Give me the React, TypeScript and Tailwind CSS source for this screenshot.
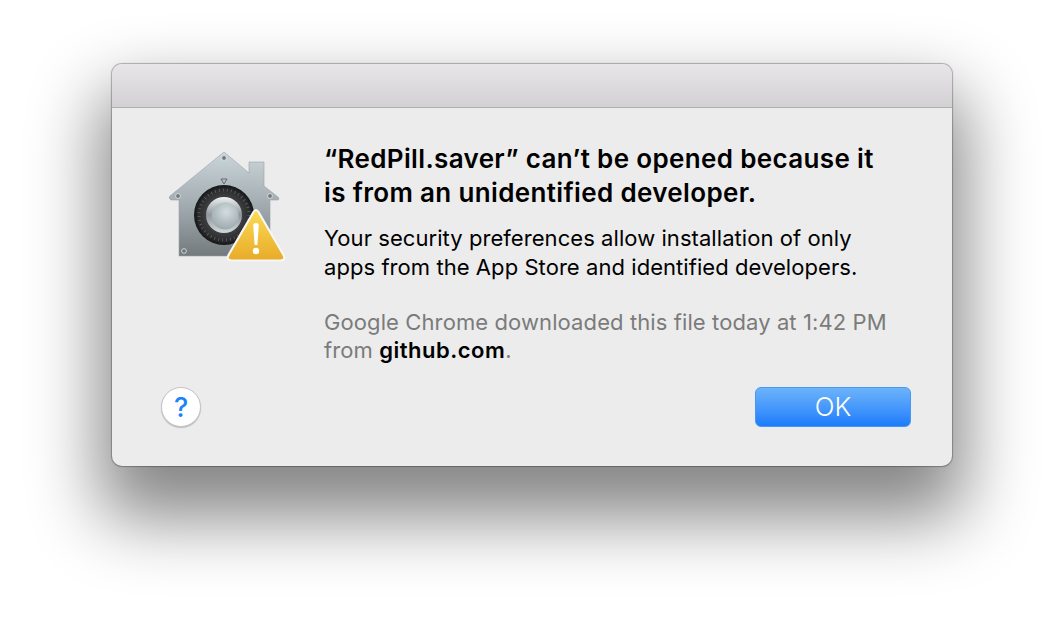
import React from 'react';

const GatekeeperIcon: React.FC = () => (
  <svg width="130" height="120" viewBox="160 145 130 120" className="shrink-0">
    <defs>
      <linearGradient id="house" x1="0" y1="0" x2="0" y2="1">
        <stop offset="0" stopColor="#cbd6da" />
        <stop offset="0.5" stopColor="#a3adb1" />
        <stop offset="1" stopColor="#737a7e" />
      </linearGradient>
      <radialGradient id="dial" cx="0.5" cy="0.5" r="0.5">
        <stop offset="0.6" stopColor="#3d3f41" />
        <stop offset="0.85" stopColor="#2b2c2e" />
        <stop offset="1" stopColor="#141515" />
      </radialGradient>
      <linearGradient id="knob" x1="0" y1="0" x2="0" y2="1">
        <stop offset="0" stopColor="#eef1f2" />
        <stop offset="0.5" stopColor="#8f979b" />
        <stop offset="1" stopColor="#d5dadc" />
      </linearGradient>
      <radialGradient id="knobTop" cx="0.55" cy="0.35" r="0.7">
        <stop offset="0" stopColor="#d3dde1" />
        <stop offset="1" stopColor="#9aa6ab" />
      </radialGradient>
      <linearGradient id="warn" x1="0" y1="0" x2="0" y2="1">
        <stop offset="0" stopColor="#fbdb55" />
        <stop offset="1" stopColor="#e8ab28" />
      </linearGradient>
    </defs>
    <path
      d="M224 152 L249 173 L249 162 L264 162 L264 186 L278 197 Q280 199 278 200 L270 200 L270 256 L179 256 L179 200 L171 200 Q168 198 170 196 Z"
      fill="url(#house)"
      stroke="#9aa3a7"
      strokeWidth="0.6"
    />
    <circle cx="224" cy="158" r="2.4" fill="#6f787c" stroke="#e3e7e9" strokeWidth="0.8" />
    <circle cx="178" cy="196" r="2.4" fill="#6f787c" stroke="#e3e7e9" strokeWidth="0.8" />
    <circle cx="270" cy="196" r="2.4" fill="#6f787c" stroke="#e3e7e9" strokeWidth="0.8" />
    <circle cx="184" cy="251" r="2.4" fill="#6f787c" stroke="#e3e7e9" strokeWidth="0.8" />
    <path d="M221 179 H227 L224 184 Z" fill="none" stroke="#5a6165" strokeWidth="0.9" />
    <circle cx="224" cy="215" r="30" fill="url(#dial)" />
    <circle cx="224" cy="215" r="25" fill="none" stroke="#5e6062" strokeWidth="3" strokeDasharray="0.8 3.2" />
    <circle cx="224" cy="215" r="18" fill="url(#knob)" />
    <circle cx="225" cy="216" r="13.5" fill="url(#knobTop)" />
    <path
      d="M253.5 212 Q256 208 258.5 212 L283.5 255 Q286 260.5 280.5 260.5 L231.5 260.5 Q226 260.5 228.5 255 Z"
      fill="url(#warn)"
      stroke="#f6f6f6"
      strokeWidth="2.2"
      strokeLinejoin="round"
    />
    <path d="M253.2 225 Q253 223 256 223 Q259 223 258.8 225 L257.4 245 H254.6 Z" fill="#fff" />
    <circle cx="256" cy="251" r="3.2" fill="#fff" />
  </svg>
);

const App: React.FC = () => {
  return (
    <div className="w-[1064px] h-[626px] bg-white overflow-hidden pt-[64px] pl-[112px] font-['Inter',sans-serif]">
      <div className="w-[840px] h-[402px] rounded-[10px] bg-[#ececec] overflow-hidden flex flex-col shadow-[0_0_1px_1px_rgba(0,0,0,0.28),0_40px_70px_12px_rgba(0,0,0,0.48)]">
        <div className="h-[44px] shrink-0 bg-gradient-to-b from-[#e8e6e8] to-[#d2d0d2] border-b border-[#b1b0b1]" />

        <div className="flex flex-1 pl-[48px] pt-[37px]">
          <GatekeeperIcon />
          <div className="ml-[34px] -mt-[3px]">
            <h1 className="text-[26px] leading-[34px] font-semibold text-black tracking-[0.35px] whitespace-nowrap">
              “RedPill.saver” can’t be opened because it
              <br />
              is from an unidentified developer.
            </h1>
            <p className="mt-[14px] text-[22px] leading-[29px] text-black tracking-[0.06px] whitespace-nowrap">
              Your security preferences allow installation of only
              <br />
              apps from the App Store and identified developers.
            </p>
            <p className="mt-[26px] text-[22px] leading-[28px] text-[#7b7b7b] tracking-[0.1px] whitespace-nowrap">
              Google Chrome downloaded this file today at 1:42 PM
              <br />
              from <span className="font-semibold text-black tracking-[0.5px]">github.com</span>.
            </p>
          </div>
        </div>

        <div className="flex items-center justify-between pl-[49px] pr-[41px] pb-[39px]">
          <button className="w-[40px] h-[40px] rounded-full bg-white border border-[#c4c4c4] shadow-[0_1px_1px_rgba(0,0,0,0.2)] text-[#1a82fb] text-[27px] font-medium leading-none">
            ?
          </button>
          <button className="w-[156px] h-[40px] rounded-[6px] bg-gradient-to-b from-[#6cb3fa] to-[#1a7cfb] border border-[#4a96f5] text-white text-[26px] font-light leading-none">
            OK
          </button>
        </div>
      </div>
    </div>
  );
};

export default App;
